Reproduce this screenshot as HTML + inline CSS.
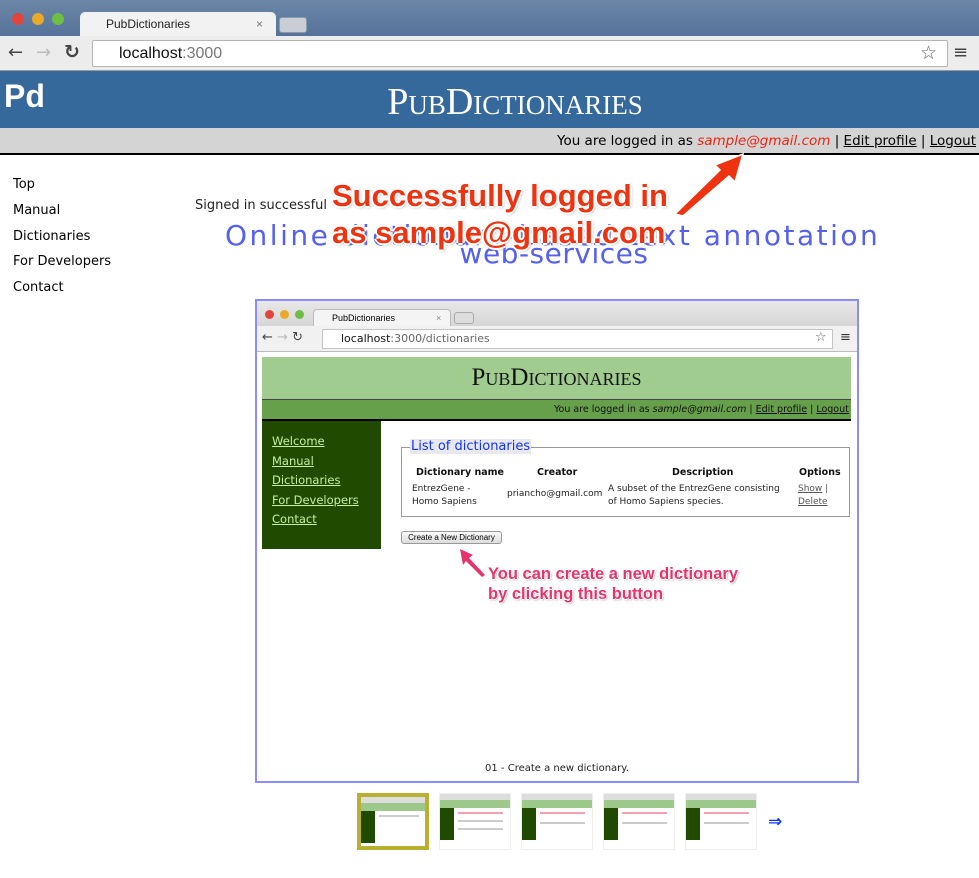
<!DOCTYPE html>
<html><head><meta charset="utf-8"><style>
*{margin:0;padding:0;box-sizing:border-box}
body{width:979px;height:878px;position:relative;overflow:hidden;background:#fff;font-family:"DejaVu Sans","Liberation Sans",sans-serif}
.a{position:absolute}
.dot{position:absolute;width:12px;height:12px;border-radius:50%}
.thumb{position:absolute;top:793px;width:72px;height:57px;background:#fff;border:1px solid #eee}
.thumb .h{position:absolute;left:0;top:0;width:100%;height:6px;background:#ddd}
.thumb .g{position:absolute;left:0;top:6px;width:100%;height:8px;background:#9cc98a}
.thumb .s{position:absolute;left:0;top:14px;width:14px;height:32px;background:#1f4a00}
.thumb .l{position:absolute;left:18px;height:2px;background:#ccc}
.rt{color:#ee3311;font-weight:bold;font-family:"Liberation Sans",sans-serif;text-shadow:-2px 0 #fff,2px 0 #fff,0 -2px #fff,0 2px #fff,1px 1px 3px #888}
.pk{color:#e8336a;font-weight:bold;font-family:"Liberation Sans",sans-serif;text-shadow:-1px 0 #fff,1px 0 #fff,0 -1px #fff,0 1px #fff,1px 1px 2px #999}
</style></head><body>
<div class="a" style="left:0;top:0;width:979px;height:36px;background:linear-gradient(#6c86a6,#55739a)"></div>
<div class="dot" style="left:12px;top:13px;background:#e0443e"></div>
<div class="dot" style="left:32px;top:13px;background:#e9a92a"></div>
<div class="dot" style="left:52px;top:13px;background:#6cbf43"></div>
<div class="a" style="left:80px;top:12px;width:196px;height:26px;background:#f2f2f2;border-radius:5px 5px 0 0;font-size:12px;padding:5px 0 0 26px;color:#222;font-family:'Liberation Sans',sans-serif">PubDictionaries<span style="position:absolute;left:176px;color:#777">×</span></div>
<div class="a" style="left:279px;top:17px;width:28px;height:16px;background:#c9ced6;border-radius:3px;border:1px solid #8a98aa"></div>
<div class="a" style="left:0;top:36px;width:979px;height:35px;background:#ececec;border-bottom:1px solid #999"></div>
<div class="a" style="left:8px;top:42px;font-size:18px;color:#444">←</div>
<div class="a" style="left:36px;top:42px;font-size:18px;color:#bbb">→</div>
<div class="a" style="left:64px;top:41px;font-size:19px;color:#444;font-weight:bold">↻</div>
<div class="a" style="left:92px;top:40px;width:856px;height:27px;background:#fff;border:1px solid #b5b5b5;border-radius:2px;font-family:'Liberation Sans',sans-serif;font-size:16px;padding:4px 0 0 26px;color:#111">localhost<span style="color:#777">:3000</span></div>
<div class="a" style="left:920px;top:42px;font-size:19px;color:#666">☆</div>
<div class="a" style="left:953px;top:42px;font-size:18px;color:#444">≡</div>
<div class="a" style="left:0;top:71px;width:979px;height:57px;background:#35699b"></div>
<div class="a" style="left:4px;top:78px;color:#fff;font-size:32px;font-weight:bold;font-family:'Liberation Sans',sans-serif">Pd</div>
<div class="a" style="left:0;top:80px;width:1030px;text-align:center;color:#fff;font-family:'Liberation Serif',serif;font-size:38px;font-variant:small-caps">PubDictionaries</div>
<div class="a" style="left:0;top:128px;width:979px;height:27px;background:#d4d4d4;border-bottom:2px solid #000"></div>
<div class="a" style="left:557px;top:133px;font-size:13.5px;color:#000;white-space:nowrap">You are logged in as <i style="color:#ee2211">sample@gmail.com</i> | <u>Edit profile</u> | <u>Logout</u></div>
<div class="a" style="left:13px;top:172px;font-size:13px;line-height:25.8px;color:#000">Top<br>Manual<br>Dictionaries<br>For Developers<br>Contact</div>
<div class="a" style="left:195px;top:198px;font-size:13px;color:#222">Signed in successful</div>
<div class="a" style="left:225px;top:219px;font-size:28px;letter-spacing:2.5px;color:#5560ee;white-space:nowrap">Online dictionary-based text annotation</div>
<div class="a" style="left:0;top:237px;width:1108px;text-align:center;font-size:28px;letter-spacing:0.5px;color:#5560ee">web-services</div>
<div class="a rt" style="left:332px;top:178px;font-size:31px;white-space:nowrap">Successfully logged in</div>
<div class="a rt" style="left:332px;top:215px;font-size:31px;white-space:nowrap">as sample@gmail.com</div>
<svg class="a" style="left:665px;top:148px" width="85" height="75"><path d="M10 66 L55 22 L50 17 L78 6 L70 34 L64 28 L18 68Z" fill="#ee3311" stroke="#fff" stroke-width="1.5"/></svg>
<div class="a" style="left:255px;top:299px;width:604px;height:484px;border:2px solid #8c8cff;background:#fff"></div>
<div class="a" style="left:257px;top:301px;width:600px;height:25px;background:linear-gradient(#e8e8e8,#d6d6d6)"></div>
<div class="dot" style="left:265px;top:310px;width:9px;height:9px;background:#e0443e"></div>
<div class="dot" style="left:280px;top:310px;width:9px;height:9px;background:#e9a92a"></div>
<div class="dot" style="left:295px;top:310px;width:9px;height:9px;background:#6cbf43"></div>
<div class="a" style="left:313px;top:309px;width:138px;height:18px;background:#f4f4f4;border:1px solid #bbb;border-bottom:none;border-radius:4px 4px 0 0;font-size:9px;padding:3px 0 0 18px;font-family:'Liberation Sans',sans-serif">PubDictionaries<span style="position:absolute;left:122px;color:#888">×</span></div>
<div class="a" style="left:454px;top:312px;width:20px;height:12px;border:1px solid #aaa;border-radius:3px;background:#ddd"></div>
<div class="a" style="left:257px;top:326px;width:600px;height:26px;background:#f1f1f1;border-bottom:1px solid #bbb"></div>
<div class="a" style="left:262px;top:330px;font-size:13px;color:#444">← <span style="color:#bbb">→</span> ↻</div>
<div class="a" style="left:322px;top:329px;width:511px;height:20px;background:#fff;border:1px solid #c4c4c4;font-size:11px;padding:2px 0 0 18px;color:#111">localhost<span style="color:#666">:3000/dictionaries</span></div>
<div class="a" style="left:815px;top:330px;font-size:13px;color:#666">☆</div>
<div class="a" style="left:840px;top:330px;font-size:13px;color:#333">≡</div>
<div class="a" style="left:262px;top:357px;width:589px;height:42px;background:#a0cc90"></div>
<div class="a" style="left:262px;top:364px;width:589px;text-align:center;font-family:'Liberation Serif',serif;font-size:25px;font-variant:small-caps;color:#111">PubDictionaries</div>
<div class="a" style="left:262px;top:399px;width:589px;height:22px;background:#66a04a;border-top:1px solid #444;border-bottom:2px solid #000"></div>
<div class="a" style="left:554px;top:404px;font-size:9.5px;white-space:nowrap;color:#111">You are logged in as <i>sample@gmail.com</i> | <u>Edit profile</u> | <u>Logout</u></div>
<div class="a" style="left:262px;top:421px;width:119px;height:128px;background:#1f4a00"></div>
<div class="a" style="left:272px;top:432px;font-size:11.5px;line-height:19.5px;color:#c8f0a0;text-decoration:underline">Welcome<br>Manual<br>Dictionaries<br>For Developers<br>Contact</div>
<div class="a" style="left:401px;top:447px;width:449px;height:70px;border:1px solid #999"></div>
<div class="a" style="left:410px;top:439px;font-size:13px;color:#1133ff;background:#e8e8ee;padding:0 1px">List of dictionaries</div>
<div class="a" style="left:416px;top:467px;font-size:9.5px;font-weight:bold;color:#111">Dictionary name</div>
<div class="a" style="left:537px;top:467px;font-size:9.5px;font-weight:bold;color:#111">Creator</div>
<div class="a" style="left:672px;top:467px;font-size:9.5px;font-weight:bold;color:#111">Description</div>
<div class="a" style="left:799px;top:467px;font-size:9.5px;font-weight:bold;color:#111">Options</div>
<div class="a" style="left:412px;top:483px;font-size:9px;line-height:13px;color:#222">EntrezGene -<br>Homo Sapiens</div>
<div class="a" style="left:507px;top:489px;font-size:9px;color:#222">priancho@gmail.com</div>
<div class="a" style="left:608px;top:483px;font-size:9px;line-height:13px;color:#222">A subset of the EntrezGene consisting<br>of Homo Sapiens species.</div>
<div class="a" style="left:798px;top:483px;font-size:9px;line-height:13px;color:#555"><u>Show</u> |<br><u>Delete</u></div>
<div class="a" style="left:401px;top:531px;width:101px;height:13px;border:1px solid #999;border-radius:3px;background:linear-gradient(#fafafa,#ddd);font-size:8px;text-align:center;line-height:11px;font-family:'Liberation Sans',sans-serif">Create a New Dictionary</div>
<svg class="a" style="left:455px;top:545px" width="35" height="35"><path d="M5 4 L18 10 L14 13 L30 30 L27 32 L11 16 L8 20Z" fill="#e8336a"/></svg>
<div class="a pk" style="left:488px;top:564px;font-size:16.5px;line-height:20px">You can create a new dictionary<br>by clicking this button</div>
<div class="a" style="left:257px;top:763px;width:600px;text-align:center;font-size:10px;color:#222">01 - Create a new dictionary.</div>
<div class="thumb" style="left:357px;border:4px solid #b8b030"><div class="h"></div><div class="g"></div><div class="s"></div><div class="l" style="top:18px;width:40px"></div></div>
<div class="thumb" style="left:439px"><div class="h"></div><div class="g"></div><div class="s"></div><div class="l" style="top:18px;width:45px;background:#f3a0b0"></div><div class="l" style="top:26px;width:45px"></div><div class="l" style="top:34px;width:45px"></div></div>
<div class="thumb" style="left:521px"><div class="h"></div><div class="g"></div><div class="s"></div><div class="l" style="top:18px;width:45px;background:#f3a0b0"></div><div class="l" style="top:28px;width:45px"></div></div>
<div class="thumb" style="left:603px"><div class="h"></div><div class="g"></div><div class="s"></div><div class="l" style="top:18px;width:45px;background:#f3a0b0"></div><div class="l" style="top:28px;width:45px"></div></div>
<div class="thumb" style="left:685px"><div class="h"></div><div class="g"></div><div class="s"></div><div class="l" style="top:18px;width:45px;background:#f3a0b0"></div><div class="l" style="top:28px;width:45px"></div></div>
<div class="a" style="left:768px;top:812px;font-size:17px;color:#1133ff;font-weight:bold">⇒</div>
</body></html>
